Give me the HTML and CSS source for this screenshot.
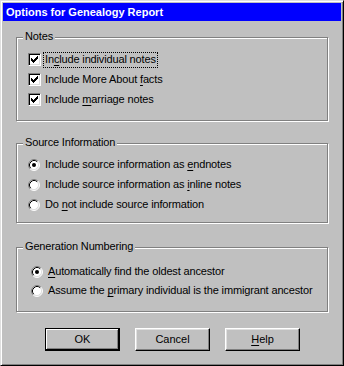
FILE: index.html
```html
<!DOCTYPE html>
<html lang="en">
<head>
    <meta charset="UTF-8">
    <title>Options for Genealogy Report</title>
    <link rel="stylesheet" href="styles.css">
</head>
<body>

    <div class="dialog">
        <div class="titlebar">Options for Genealogy Report</div>

        <div class="dialog-body">

            <section class="group group-notes">
                <div class="group-title">Notes</div>
                <div class="options">
                    <label class="opt">
                        <span class="check"><svg width="11" height="11" viewBox="0 0 11 11"><path d="M2 4h1v3h-1zM3 5h1v3h-1zM4 6h1v3h-1zM5 5h1v3h-1zM6 4h1v3h-1zM7 3h1v3h-1zM8 2h1v3h-1z" fill="#000"/></svg></span>
                        <span class="opt-text focus">In<u>c</u>lude individual notes</span>
                    </label>
                    <label class="opt">
                        <span class="check"><svg width="11" height="11" viewBox="0 0 11 11"><path d="M2 4h1v3h-1zM3 5h1v3h-1zM4 6h1v3h-1zM5 5h1v3h-1zM6 4h1v3h-1zM7 3h1v3h-1zM8 2h1v3h-1z" fill="#000"/></svg></span>
                        <span class="opt-text">Include More About <u>f</u>acts</span>
                    </label>
                    <label class="opt">
                        <span class="check"><svg width="11" height="11" viewBox="0 0 11 11"><path d="M2 4h1v3h-1zM3 5h1v3h-1zM4 6h1v3h-1zM5 5h1v3h-1zM6 4h1v3h-1zM7 3h1v3h-1zM8 2h1v3h-1z" fill="#000"/></svg></span>
                        <span class="opt-text">Include <u>m</u>arriage notes</span>
                    </label>
                </div>
            </section>

            <section class="group group-source">
                <div class="group-title">Source Information</div>
                <div class="options">
                    <label class="opt">
                        <svg class="radio" width="12" height="12" viewBox="0 0 12 12">
                            <circle cx="6" cy="6" r="5" fill="#fff"/>
                            <path d="M2.11 9.89A5.5 5.5 0 0 1 9.89 2.11" fill="none" stroke="#808080"/>
                            <path d="M9.89 2.11A5.5 5.5 0 0 1 2.11 9.89" fill="none" stroke="#fff"/>
                            <path d="M2.82 9.18A4.5 4.5 0 0 1 9.18 2.82" fill="none" stroke="#000"/>
                            <path d="M9.18 2.82A4.5 4.5 0 0 1 2.82 9.18" fill="none" stroke="#dfdfdf"/>
                            <circle cx="6" cy="6" r="2" fill="#000"/>
                        </svg>
                        <span class="opt-text">Include source information as <u>e</u>ndnotes</span>
                    </label>
                    <label class="opt">
                        <svg class="radio" width="12" height="12" viewBox="0 0 12 12">
                            <circle cx="6" cy="6" r="5" fill="#fff"/>
                            <path d="M2.11 9.89A5.5 5.5 0 0 1 9.89 2.11" fill="none" stroke="#808080"/>
                            <path d="M9.89 2.11A5.5 5.5 0 0 1 2.11 9.89" fill="none" stroke="#fff"/>
                            <path d="M2.82 9.18A4.5 4.5 0 0 1 9.18 2.82" fill="none" stroke="#000"/>
                            <path d="M9.18 2.82A4.5 4.5 0 0 1 2.82 9.18" fill="none" stroke="#dfdfdf"/>
                        </svg>
                        <span class="opt-text">Include source information as <u>i</u>nline notes</span>
                    </label>
                    <label class="opt">
                        <svg class="radio" width="12" height="12" viewBox="0 0 12 12">
                            <circle cx="6" cy="6" r="5" fill="#fff"/>
                            <path d="M2.11 9.89A5.5 5.5 0 0 1 9.89 2.11" fill="none" stroke="#808080"/>
                            <path d="M9.89 2.11A5.5 5.5 0 0 1 2.11 9.89" fill="none" stroke="#fff"/>
                            <path d="M2.82 9.18A4.5 4.5 0 0 1 9.18 2.82" fill="none" stroke="#000"/>
                            <path d="M9.18 2.82A4.5 4.5 0 0 1 2.82 9.18" fill="none" stroke="#dfdfdf"/>
                        </svg>
                        <span class="opt-text">Do <u>n</u>ot include source information</span>
                    </label>
                </div>
            </section>

            <section class="group group-gen">
                <div class="group-title">Generation Numbering</div>
                <div class="options">
                    <label class="opt">
                        <svg class="radio" width="12" height="12" viewBox="0 0 12 12">
                            <circle cx="6" cy="6" r="5" fill="#fff"/>
                            <path d="M2.11 9.89A5.5 5.5 0 0 1 9.89 2.11" fill="none" stroke="#808080"/>
                            <path d="M9.89 2.11A5.5 5.5 0 0 1 2.11 9.89" fill="none" stroke="#fff"/>
                            <path d="M2.82 9.18A4.5 4.5 0 0 1 9.18 2.82" fill="none" stroke="#000"/>
                            <path d="M9.18 2.82A4.5 4.5 0 0 1 2.82 9.18" fill="none" stroke="#dfdfdf"/>
                            <circle cx="6" cy="6" r="2" fill="#000"/>
                        </svg>
                        <span class="opt-text"><u>A</u>utomatically find the oldest ancestor</span>
                    </label>
                    <label class="opt">
                        <svg class="radio" width="12" height="12" viewBox="0 0 12 12">
                            <circle cx="6" cy="6" r="5" fill="#fff"/>
                            <path d="M2.11 9.89A5.5 5.5 0 0 1 9.89 2.11" fill="none" stroke="#808080"/>
                            <path d="M9.89 2.11A5.5 5.5 0 0 1 2.11 9.89" fill="none" stroke="#fff"/>
                            <path d="M2.82 9.18A4.5 4.5 0 0 1 9.18 2.82" fill="none" stroke="#000"/>
                            <path d="M9.18 2.82A4.5 4.5 0 0 1 2.82 9.18" fill="none" stroke="#dfdfdf"/>
                        </svg>
                        <span class="opt-text">Assume the <u>p</u>rimary individual is the immigrant ancestor</span>
                    </label>
                </div>
            </section>

            <div class="buttons">
                <button class="btn btn-default">OK</button>
                <button class="btn">Cancel</button>
                <button class="btn"><u>H</u>elp</button>
            </div>

        </div>
    </div>

</body>
</html>
```

FILE: styles.css
```css
body {
    margin: 0;
    background-color: #c0c0c0;
    font-family: "Liberation Sans", Arial, sans-serif;
    font-size: 11px;
    color: #000;
}

u {
    text-decoration-thickness: 1px;
    text-underline-offset: 2px;
}

.dialog {
    width: 344px;
    height: 366px;
    box-sizing: border-box;
    padding: 2px;
    background-color: #c0c0c0;
    border: 1px solid;
    border-color: #dfdfdf #000 #000 #dfdfdf;
    box-shadow: inset 1px 1px #fff, inset -1px -1px #808080;
}

.titlebar {
    height: 18px;
    line-height: 18px;
    padding-left: 3px;
    background-color: #0000ff;
    color: #fff;
    font-weight: bold;
}

.dialog-body {
    padding: 0 13px;
}

/* gruppe-bokse */
.group {
    border: 1px solid #808080;
    box-shadow: inset 1px 1px #fff, 1px 1px #fff;
    padding: 0 6px;
}

.group-title {
    display: table;
    margin-top: -9px;
    padding: 0 2px;
    line-height: 14px;
    background-color: #c0c0c0;
    letter-spacing: -0.15px;
}

.group-notes {
    margin-top: 16px;
    padding-bottom: 7px;
}

.group-notes .options {
    padding: 10px 0 0 5px;
}

.group-source {
    margin-top: 22px;
    padding-bottom: 4px;
}

.group-source .options {
    padding: 9px 0 0 5px;
}

.group-gen {
    margin-top: 24px;
    padding-bottom: 8px;
}

.group-gen .options {
    padding: 12px 0 0 8px;
}

.opt {
    display: flex;
    align-items: flex-start;
    height: 20px;
}

.group-gen .opt {
    height: 19px;
}

.opt-text {
    padding: 0 1px 1px;
    line-height: 13px;
    letter-spacing: -0.15px;
    white-space: nowrap;
}

.focus {
    outline: 1px dotted #000;
}

.check {
    display: block;
    width: 13px;
    height: 13px;
    box-sizing: border-box;
    margin-right: 3px;
    background-color: #fff;
    border: 1px solid;
    border-color: #808080 #fff #fff #808080;
    box-shadow: inset 1px 1px #000, inset -1px -1px #dfdfdf;
}

.check svg {
    display: block;
}

.radio {
    display: block;
    margin: 1px 4px 0 0;
}

.buttons {
    display: flex;
    gap: 15px;
    margin-top: 16px;
    padding-left: 29px;
}

.btn {
    width: 75px;
    height: 23px;
    padding: 0;
    font-family: inherit;
    font-size: 11px;
    line-height: 21px;
    color: #000;
    background-color: #c0c0c0;
    border: 1px solid;
    border-color: #fff #000 #000 #fff;
    box-shadow: inset -1px -1px #808080, inset 1px 1px #dfdfdf;
}

.btn-default {
    border-color: #000;
    box-shadow: inset -1px -1px #000, inset 1px 1px #fff, inset -2px -2px #808080;
}
```
